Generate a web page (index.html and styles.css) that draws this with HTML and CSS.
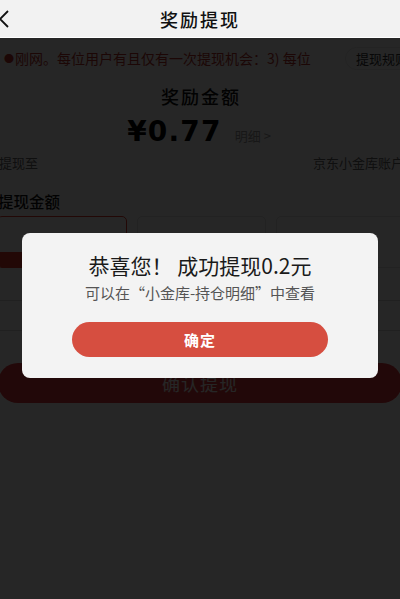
FILE: index.html
```html
<!DOCTYPE html>
<html lang="zh-CN">
<head>
<meta charset="utf-8">
<title>奖励提现</title>
<link rel="stylesheet" href="styles.css">
</head>
<body>
<header class="header">
  <span class="back">
    <svg width="10" height="18" viewBox="0 0 10 18"><polyline points="9,1 1,9 9,17" fill="none" stroke="#111" stroke-width="1.8" stroke-linejoin="miter"/></svg>
  </span>
  <h1 class="title">奖励提现</h1>
  <span></span>
</header>

<main class="page">
  <div class="notice">
    <div class="notice-text"><span class="dot">●</span>刚网。每位用户有且仅有一次提现机会：3) 每位</div>
    <span class="rule-pill">提现规则</span>
  </div>

  <section class="summary">
    <div class="summary-title">奖励金额</div>
    <div class="amount-row">
      <span class="amount">¥0.77</span>
      <span class="detail">明细 &gt;</span>
    </div>
  </section>

  <div class="to-row">
    <span>提现至</span>
    <span>京东小金库账户</span>
  </div>

  <div class="section-label">提现金额</div>

  <div class="options">
    <div class="option active"><span class="opt-val"></span><span class="opt-foot"></span></div>
    <div class="option"><span class="opt-val"></span></div>
    <div class="option"><span class="opt-val"></span></div>
  </div>

  <div class="lines">
    <div class="line-row"></div>
    <div class="line-row"></div>
  </div>

  <button class="confirm">确认提现</button>
</main>

<div class="mask"></div>

<div class="dialog">
  <div class="dialog-title">恭喜您！ 成功提现0.2元</div>
  <div class="dialog-sub">可以在“小金库-持仓明细”中查看</div>
  <button class="dialog-btn">确定</button>
</div>
</body>
</html>
```

FILE: styles.css
```css
* { box-sizing: border-box; }
html, body {
  margin: 0;
  padding: 0;
}
body {
  width: 400px;
  height: 599px;
  overflow: hidden;
  position: relative;
  background: #fff;
  font-family: "Noto Sans CJK SC", "Noto Sans", sans-serif;
  color: #111;
}

.header {
  height: 38px;
  background: #f2f2f2;
  border-bottom: 1px solid #ffffff;
  display: grid;
  grid-template-columns: 1fr auto 1fr;
  align-items: center;
}
.back {
  display: flex;
  align-items: center;
  margin-left: -1px;
}
.title {
  margin: 0;
  font-size: 18px;
  font-weight: 500;
  letter-spacing: 2px;
  line-height: 24px;
  color: #111;
}

.page {
  display: flex;
  flex-direction: column;
}

.notice {
  margin-top: 9px;
  height: 23px;
  display: flex;
  align-items: center;
  overflow: hidden;
}
.notice-text {
  width: 318px;
  flex: none;
  padding-left: 4px;
  white-space: nowrap;
  overflow: hidden;
  font-size: 14px;
  line-height: 20px;
  color: #b8302a;
}
.dot {
  font-size: 10px;
  margin-right: 1px;
  vertical-align: 1px;
}
.rule-pill {
  flex: none;
  margin-left: 27px;
  height: 23px;
  padding: 0 12px 0 10px;
  border: 1px solid #e6e6e6;
  border-radius: 12px;
  font-size: 13px;
  line-height: 21px;
  color: #333;
  white-space: nowrap;
}

.summary {
  margin-top: 14px;
  display: flex;
  flex-direction: column;
  align-items: center;
}
.summary-title {
  font-size: 18px;
  font-weight: 500;
  letter-spacing: 2px;
  line-height: 24px;
  padding-left: 2px;
}
.amount-row {
  margin-top: 7px;
  display: flex;
  align-items: baseline;
  padding-left: 1px;
}
.amount {
  font-family: "DejaVu Sans", sans-serif;
  font-weight: bold;
  font-size: 28px;
  letter-spacing: 1.2px;
  line-height: 34px;
  color: #000;
  margin-left: -3px;
}
.detail {
  margin-left: 13px;
  font-size: 13px;
  color: #999;
}

.to-row {
  margin: 4px -4px 0 -1px;
  display: flex;
  justify-content: space-between;
  font-size: 13px;
  line-height: 20px;
  color: #666;
}

.section-label {
  margin-top: 18px;
  margin-left: -2px;
  font-size: 15.5px;
  font-weight: 500;
  line-height: 20px;
  color: #111;
}

.options {
  margin: 5px -6px 0 -3px;
  display: grid;
  grid-template-columns: repeat(3, 1fr);
  gap: 10px;
}
.option {
  height: 52px;
  border: 1px solid #e0e0e0;
  border-radius: 5px;
  display: flex;
  flex-direction: column;
  overflow: hidden;
}
.option.active {
  border-color: #e23a2c;
}
.opt-val {
  flex: 1;
}
.opt-foot {
  height: 15px;
  background: #e23a2c;
}

.lines {
  margin-top: 3px;
  display: flex;
  flex-direction: column;
}
.line-row {
  height: 30px;
  border-bottom: 1px solid #d8d8d8;
}

.confirm {
  margin: 32px -2px 0 -2px;
  height: 40px;
  border: 0;
  border-radius: 20px;
  background: #e4393c;
  color: #fff;
  font-family: "Noto Sans CJK SC", sans-serif;
  font-size: 18px;
  letter-spacing: 1px;
}

.mask {
  position: absolute;
  top: 38px;
  left: 0;
  right: 0;
  bottom: 0;
  background: rgba(0, 0, 0, 0.85);
}

.dialog {
  position: absolute;
  top: 233px;
  left: 22px;
  width: 356px;
  height: 145px;
  background: #f3f3f3;
  border-radius: 8px;
  padding: 18px 40px 0;
  display: flex;
  flex-direction: column;
  align-items: center;
}
.dialog-title {
  font-size: 21px;
  line-height: 28px;
  color: #1a1a1a;
  white-space: nowrap;
}
.dialog-sub {
  margin-top: 4px;
  font-size: 15px;
  line-height: 20px;
  color: #555;
  white-space: nowrap;
}
.dialog-btn {
  margin-top: 19px;
  width: 256px;
  height: 35px;
  border: 0;
  border-radius: 18px;
  background: #d64e40;
  color: #fff;
  font-family: "Noto Sans CJK SC", sans-serif;
  font-size: 15px;
  font-weight: bold;
  letter-spacing: 1px;
}
```
